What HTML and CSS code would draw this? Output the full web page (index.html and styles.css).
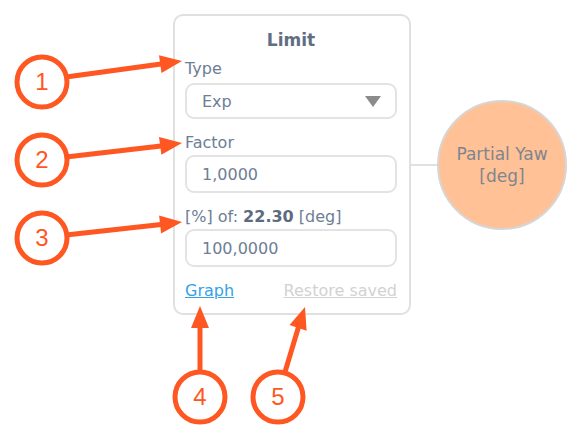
FILE: index.html
```html
<!DOCTYPE html>
<html lang="en">
<head>
    <meta charset="UTF-8">
    <title>Limit node settings</title>
    <link rel="stylesheet" href="styles.css">
</head>
<body>
    <div class="stage">
        <div class="row">
            <div class="card">
                <div class="card-title">Limit</div>

                <div class="field-label first">Type</div>
                <div class="select">
                    <span>Exp</span>
                    <span class="caret"></span>
                </div>

                <div class="field-label">Factor</div>
                <div class="input">1,0000</div>

                <div class="field-label">[%] of: <b>22.30</b> [deg]</div>
                <div class="input">100,0000</div>

                <div class="links">
                    <a href="#" class="link">Graph</a>
                    <a href="#" class="link muted">Restore saved</a>
                </div>
            </div>
            <div class="connector"></div>
            <div class="node">Partial Yaw<br>[deg]</div>
        </div>

        <!-- numbered callouts drawn over the card -->
        <svg class="callouts" width="580" height="439" viewBox="0 0 580 439">
            <g stroke="#ff5722" stroke-width="5" fill="none">
                <circle cx="42" cy="82" r="25"/>
                <circle cx="42" cy="160" r="25"/>
                <circle cx="42" cy="238" r="25"/>
                <circle cx="200" cy="397" r="25"/>
                <circle cx="278" cy="397" r="25"/>
                <line x1="66" y1="77" x2="161" y2="64"/>
                <line x1="66" y1="157" x2="161" y2="146"/>
                <line x1="66" y1="235" x2="161" y2="224.5"/>
                <line x1="200" y1="372" x2="200" y2="327"/>
                <line x1="285" y1="372" x2="298.5" y2="327"/>
            </g>
            <g fill="#ff5722">
                <polygon points="182,61 161.5,73 159,55.2"/>
                <polygon points="182,143 161.4,154.8 159,137"/>
                <polygon points="182,222 161.1,233.4 159.1,215.6"/>
                <polygon points="200,306 191,328 209,328"/>
                <polygon points="305,307 306.6,330.7 289.5,325.1"/>
            </g>
            <g class="callout-num" fill="#ff5722" text-anchor="middle">
                <text x="42" y="90">1</text>
                <text x="42" y="168">2</text>
                <text x="42" y="246">3</text>
                <text x="200" y="405">4</text>
                <text x="278" y="405">5</text>
            </g>
        </svg>
    </div>
</body>
</html>
```

FILE: styles.css
```css
body {
    margin: 0;
    background: #fff;
    font-family: 'DejaVu Sans', Verdana, sans-serif;
}

.stage {
    position: relative;
    width: 580px;
    height: 439px;
    overflow: hidden;
}

.row {
    display: flex;
    align-items: center;
    padding: 14px 0 0 173px;
}

.card {
    box-sizing: border-box;
    width: 238px;
    height: 301px;
    padding: 14px 12px 0 10px;
    border: 2px solid #e0e0e0;
    border-radius: 10px;
    background: #fff;
    color: #6d7e95;
    font-size: 16px;
}

.card-title {
    line-height: 20px;
    text-align: center;
    font-size: 17px;
    font-weight: bold;
    color: #5f6e82;
}

.field-label {
    margin-top: 14px;
    line-height: 20px;
}

.field-label.first {
    margin-top: 9px;
}

.field-label b {
    color: #5c6b80;
}

.select,
.input {
    box-sizing: border-box;
    display: flex;
    align-items: center;
    justify-content: space-between;
    height: 38px;
    margin-top: 2px;
    padding: 0 14px 0 15px;
    border: 2px solid #e3e3e3;
    border-radius: 9px;
    background: #fff;
}

.select {
    height: 36px;
    margin-top: 4px;
}

.caret {
    width: 0;
    height: 0;
    border-left: 8px solid transparent;
    border-right: 8px solid transparent;
    border-top: 11px solid #8b8b8b;
}

.links {
    display: flex;
    justify-content: space-between;
    margin-top: 14px;
    line-height: 20px;
}

.link {
    color: #34a3e6;
    text-decoration: underline;
}

.link.muted {
    color: #d2d2d2;
}

.connector {
    width: 26px;
    height: 2px;
    background: #e0e0e0;
}

.node {
    box-sizing: border-box;
    display: flex;
    align-items: center;
    justify-content: center;
    width: 130px;
    height: 130px;
    border: 2px solid #d6d6d6;
    border-radius: 50%;
    background: #ffc195;
    color: #7f858f;
    font-size: 17px;
    line-height: 22px;
    text-align: center;
}

.callouts {
    position: absolute;
    left: 0;
    top: 0;
}

.callout-num {
    font-family: 'Liberation Sans', Arial, sans-serif;
    font-size: 24px;
}
```
